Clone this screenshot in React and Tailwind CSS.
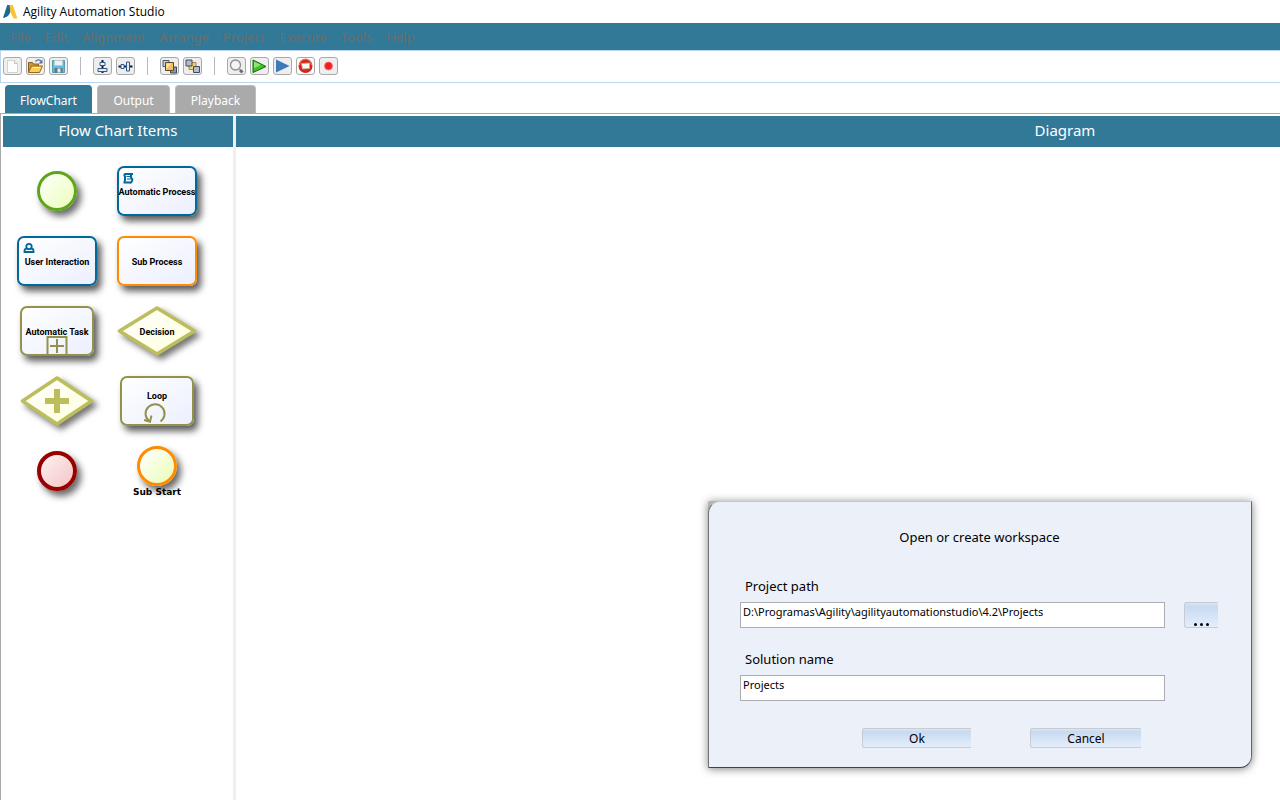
import clsx from 'clsx';

const MENUS = ['File', 'Edit', 'Alignment', 'Arrange', 'Project', 'Execute', 'Tools', 'Help'];

function Logo() {
  return (
    <svg width="16" height="16" viewBox="0 0 16 16" className="shrink-0" aria-hidden="true">
      <path d="M5.2 1h4L8.200 8.200C7.200 11 5 13.600 1 14z" fill="#1f6b86" />
      <path d="M7.400 1h3.400L15.400 14.600h-3.400C10.600 13 9.600 11 8.800 8.600z" fill="#fbc22d" />
    </svg>
  );
}

function Icon({ children }) {
  return (
    <svg width="17" height="16" viewBox="0 0 17 16" className="shrink-0" aria-hidden="true">
      {children}
    </svg>
  );
}

const NewIcon = () => (
  <Icon>
    <path d="M3.500 2.500h7l3 3v9h-10z" fill="#fdfdfd" stroke="#d4d4d4" />
    <path d="M10.500 2.500v3h3" fill="#eee" stroke="#c4c4c4" />
  </Icon>
);

const OpenIcon = () => (
  <Icon>
    <path d="M1.500 14V4.500h4l1 1.500h5V8" fill="#c99a3c" stroke="#80601f" />
    <path d="M1.500 14.500l3-6.500h11l-3 6.500z" fill="#f9cf58" stroke="#946b1c" />
    <path d="M5.500 9.500h8" stroke="#fdeeb0" />
    <path d="M8.500 3.500c2-2.500 4.500-2 5.500 0" fill="none" stroke="#51749c" strokeWidth="1.300" />
    <path d="M15.500 1.500v4h-4z" fill="#51749c" />
  </Icon>
);

const SaveIcon = () => (
  <Icon>
    <path d="M2.500 2.500h12v12h-12z" fill="#58c0e4" stroke="#5b9cb5" />
    <path d="M4.500 2.500h8v5h-8z" fill="#eef1f3" stroke="#b7cbd3" />
    <path d="M4.500 10h8v5h-8z" fill="#5d7a88" />
    <path d="M7.500 10.500h3v4h-3z" fill="#e6ebee" />
  </Icon>
);

const AlignCenterIcon = () => (
  <Icon>
    <path d="M8.500 2v13" stroke="#111827" strokeWidth="2" />
    <path d="M6 4.500h5v3H6z" fill="#f4f8fe" stroke="#31578f" />
    <path d="M4 10.500h9v3H4z" fill="#dfeaf8" stroke="#31578f" />
  </Icon>
);

const AlignMiddleIcon = () => (
  <Icon>
    <path d="M1.500 8.500h14" stroke="#111827" strokeWidth="2" />
    <path d="M4 6.500h3v4H4z" fill="#f4f8fe" stroke="#31578f" />
    <path d="M9.500 4h3v9h-3z" fill="#dfeaf8" stroke="#31578f" />
  </Icon>
);

const BringFrontIcon = () => (
  <Icon>
    <path d="M2 2.500h6v6H2z" fill="#c9d1de" stroke="#4c5870" />
    <path d="M9.500 9h6v6h-6z" fill="#8d98aa" stroke="#3d4657" />
    <path d="M4.500 4.500h8v8h-8z" fill="#f3c25c" stroke="#5d4a22" />
    <path d="M5.500 5.500h5l-5 5z" fill="#fde7a6" />
  </Icon>
);

const SendBackIcon = () => (
  <Icon>
    <path d="M5 4.500h7v7H5z" fill="#f7ce68" stroke="#b3872d" />
    <path d="M2 2h6v6H2z" fill="#b3bccb" stroke="#3f4a5f" />
    <path d="M9.500 8.500h6v6h-6z" fill="#b3bccb" stroke="#3f4a5f" />
  </Icon>
);

const SearchIcon = () => (
  <Icon>
    <circle cx="7.500" cy="7" r="5" fill="#f3f4f6" stroke="#8e8e8e" strokeWidth="1.300" />
    <path d="M11 10.500l1.500 1.500" stroke="#aaa" strokeWidth="1.500" />
    <path d="M12 12l2.500 2.500" stroke="#6f6f6f" strokeWidth="3" />
  </Icon>
);

const RunIcon = () => (
  <Icon>
    <path d="M2 2l13 6.500L2 14.500z" fill="#3fc422" stroke="#15620d" />
    <path d="M3 3.500l7 3.500-7 3z" fill="#8fe56e" />
  </Icon>
);

const StepIcon = () => (
  <Icon>
    <path d="M2 1.500l13.500 6.500L2 14.500z" fill="#3f79b8" />
  </Icon>
);

const StopIcon = () => (
  <Icon>
    <circle cx="8.500" cy="8" r="7" fill="#da2414" />
    <path d="M2.500 7a6 6 0 0 1 12 0" fill="none" stroke="#f2785f" strokeWidth="1.200" />
    <path d="M4.500 5.500l8-.500v5.500l-7 .500z" fill="#f8f8f8" stroke="#b9a9a5" strokeWidth="0.800" />
  </Icon>
);

const RecordIcon = () => (
  <Icon>
    <circle cx="8.500" cy="8" r="4" fill="#ef2020" stroke="#f47a7a" strokeWidth="0.800" />
  </Icon>
);

const TOOL_GROUPS = [
  [
    { label: 'New', icon: NewIcon },
    { label: 'Open', icon: OpenIcon },
    { label: 'Save', icon: SaveIcon },
  ],
  [
    { label: 'Align center', icon: AlignCenterIcon },
    { label: 'Align middle', icon: AlignMiddleIcon },
  ],
  [
    { label: 'Bring to front', icon: BringFrontIcon },
    { label: 'Send to back', icon: SendBackIcon },
  ],
  [
    { label: 'Find', icon: SearchIcon },
    { label: 'Run', icon: RunIcon },
    { label: 'Step', icon: StepIcon },
    { label: 'Stop', icon: StopIcon, light: true },
    { label: 'Record', icon: RecordIcon },
  ],
];

function Toolbar() {
  return (
    <div role="toolbar" className="flex h-[33px] shrink-0 items-center border-y border-l border-[#bcd5ef] pb-0.5 pl-0.5">
      {TOOL_GROUPS.map((group, i) => (
        <div key={i} className="flex items-center">
          {i > 0 && <div className="mx-3 h-[18px] w-px bg-[#b4bac2]" />}
          <div className="flex gap-1">
            {group.map(({ label, icon: ToolIcon, light }) => (
              <button
                key={label}
                aria-label={label}
                className={clsx(
                  'flex h-[18px] w-[19px] items-center justify-center rounded-[3px] border border-[#a9a9a9]',
                  light ? 'bg-white' : 'bg-[#eeeeee]',
                )}
              >
                <ToolIcon />
              </button>
            ))}
          </div>
        </div>
      ))}
    </div>
  );
}

function Tabs() {
  const tab = 'h-7 rounded-t-[4px] border-x border-t pt-px text-[12px] leading-[27px] text-white';
  return (
    <div role="tablist" className="flex shrink-0 items-end gap-[5px] border-b border-[#aaaaaa] pl-[5px] pt-0.5">
      <button role="tab" aria-selected="true" className={clsx(tab, 'w-[87px] bg-[#327997] border-[#327997]')}>
        FlowChart
      </button>
      <button role="tab" aria-selected="false" className={clsx(tab, 'w-[73px] bg-[#aaaaaa] border-[#bcbcbc]')}>
        Output
      </button>
      <button role="tab" aria-selected="false" className={clsx(tab, 'w-[81px] bg-[#aaaaaa] border-[#bcbcbc]')}>
        Playback
      </button>
    </div>
  );
}

function PanelTitle({ children }) {
  return <h2 className="h-[31px] bg-[#327997] text-center text-[15px] leading-7 text-white">{children}</h2>;
}

function Circle({ className }) {
  return (
    <div className={clsx('size-10 rounded-full bg-linear-to-br shadow-[4px_5px_7px_rgba(0,0,0,0.6)]', className)} />
  );
}

function Box({ className, children }) {
  return (
    <div
      className={clsx(
        'relative flex h-[50px] items-center justify-center rounded-[7px] border-2 bg-linear-to-br from-white to-[#eceffe] pt-0.5 shadow-[4px_5px_7px_rgba(0,0,0,0.65)]',
        className,
      )}
    >
      {children}
    </div>
  );
}

function Diamond({ wide, children }) {
  const width = wide ? 80 : 74;
  const fillId = wide ? 'decision-fill' : 'gateway-fill';
  return (
    <svg width={width} height="50" className="drop-shadow-[4px_4px_3px_rgba(0,0,0,0.55)]" aria-hidden="true">
      <defs>
        <linearGradient id={fillId} x1="0" y1="0" x2="1" y2="1">
          <stop offset="0" stopColor="#ffffff" />
          <stop offset="1" stopColor="#fdffda" />
        </linearGradient>
      </defs>
      <path
        d={`M2.500 25L${width / 2} 2L${width - 2.5} 25L${width / 2} 48Z`}
        fill={`url(#${fillId})`}
        stroke="#bcbd5c"
        strokeWidth="3.500"
        strokeLinejoin="round"
      />
      {children}
    </svg>
  );
}

function Label({ className, children }) {
  return (
    <span
      className={clsx("font-['Roboto','Noto_Sans',sans-serif] text-[9px] leading-3 font-bold whitespace-nowrap", className)}
    >
      {children}
    </span>
  );
}

function Palette() {
  return (
    <div className="grid grid-cols-[100px_100px] auto-rows-[70px] place-items-center pl-1 pt-[9px]">
      <Circle className="border-3 border-[#5ea51b] from-white to-[#eafdb5]" />

      <Box className="w-20 border-[#00699c]">
        <svg width="12" height="12" className="absolute left-[3px] top-1" fill="none" stroke="#00699c" aria-hidden="true">
          <path d="M11 2H3.500Q1.500 2.500 3 4.500V9" strokeWidth="2" />
          <path d="M9 2v3.500q2 1.500 1 3.500t-2 1.500H2.500V9" strokeWidth="2" />
          <path d="M4.500 4.500h4M5 7h4" strokeWidth="1.200" />
        </svg>
        <Label>Automatic Process</Label>
      </Box>

      <Box className="w-20 border-[#00699c]">
        <svg width="12" height="12" className="absolute left-1 top-1" fill="none" stroke="#00699c" aria-hidden="true">
          <path d="M1.500 10V8.500q0-2 3-2h3q3 0 3 2V10z" strokeWidth="1.800" />
          <circle cx="6" cy="4.500" r="2.700" fill="#f6f8fe" strokeWidth="1.800" />
        </svg>
        <Label>User Interaction</Label>
      </Box>

      <Box className="w-20 border-[#ff8c00]">
        <Label>Sub Process</Label>
      </Box>

      <Box className="w-[74px] border-[#93924a]">
        <svg width="22" height="18" className="absolute bottom-0" fill="none" stroke="#93924a" aria-hidden="true">
          <path d="M1.500 18V1h19v17" strokeWidth="2" />
          <path d="M11 3v14M4 10h14" strokeWidth="2" />
        </svg>
        <Label className="relative">Automatic Task</Label>
      </Box>

      <div className="relative flex items-center justify-center">
        <Diamond wide />
        <Label className="absolute pt-0.5">Decision</Label>
      </div>

      <Diamond>
        <path d="M37 13v24M25 25h24" stroke="#bcbd5c" strokeWidth="6" />
      </Diamond>

      <Box className="w-[74px] border-[#93924a]">
        <Label className="mb-3">Loop</Label>
        <svg width="24" height="22" className="absolute bottom-0 left-[22px]" fill="none" stroke="#93924a" aria-hidden="true">
          <path d="M5 19A9.500 9.500 0 1 1 16.500 19.500" strokeWidth="2" />
          <path d="M0 18l6 1.700l1.500-6.200" strokeWidth="2" />
        </svg>
      </Box>

      <Circle className="border-4 border-[#990000] from-[#fdf3f3] to-[#f3c4c4]" />

      <div className="flex flex-col items-center">
        <Circle className="border-3 border-[#ff8c00] from-white to-[#eafdb5]" />
        <span className="relative -mb-0.5 font-['DejaVu_Sans',sans-serif] text-[9px] leading-3 font-bold">Sub Start</span>
      </div>
    </div>
  );
}

function WorkspaceDialog() {
  const input =
    'h-[26px] w-[425px] border border-[#abadb3] bg-white px-0.5 pb-2 text-[11px] leading-4 outline-none';
  const button =
    'rounded-l-[3px] border-y border-l border-[#c8cbd0] bg-linear-to-b from-[#dbe6f5] via-[#c8daf0] via-15% to-[#e4eefc]';

  return (
    <div
      role="dialog"
      aria-labelledby="workspace-title"
      className="absolute right-7 bottom-8 w-[544px] rounded-tl-[2px] rounded-br-[12px] bg-[#b4b4b4] shadow-[0_1px_8px_rgba(0,0,0,0.5)]"
    >
      <form className="rounded-tl-[12px] rounded-br-[12px] border border-t-[#c6c8ca] border-r-[#63676b] border-b-[#3e4245] border-l-[#6f7376] bg-[#ecf0f9] pt-[25px] pb-[19px] pl-[31px] text-[13px] leading-5">
        <h1 id="workspace-title" className="pr-8 text-center">
          Open or create workspace
        </h1>

        <label htmlFor="project-path" className="mt-[29px] block pl-[5px]">
          Project path
        </label>
        <div className="mt-1.5 flex gap-[19px]">
          <input
            id="project-path"
            type="text"
            className={input}
            defaultValue="D:\Programas\Agility\agilityautomationstudio\4.2\Projects"
          />
          <button
            type="button"
            aria-label="Browse"
            className={clsx(button, 'flex h-[26px] w-[34px] items-end justify-center gap-[3px] pb-px')}
          >
            <span className="size-[3px] rounded-full bg-black" />
            <span className="size-[3px] rounded-full bg-black" />
            <span className="size-[3px] rounded-full bg-black" />
          </button>
        </div>

        <label htmlFor="solution-name" className="mt-[21px] block pl-[5px]">
          Solution name
        </label>
        <input id="solution-name" type="text" className={clsx(input, 'mt-1.5 block')} defaultValue="Projects" />

        <div className="mt-[27px] flex gap-[59px] pl-[122px] text-[12px] leading-[18px]">
          <button type="button" className={clsx(button, 'h-5 w-[109px] pt-px')}>
            Ok
          </button>
          <button type="button" className={clsx(button, 'h-5 w-[111px] pt-px')}>
            Cancel
          </button>
        </div>
      </form>
    </div>
  );
}

export default function App() {
  return (
    <div className="relative flex h-screen flex-col overflow-hidden bg-white font-['Noto_Sans','Open_Sans',sans-serif] text-black">
      <header className="flex h-[23px] shrink-0 items-center gap-[5px] pl-0.5 font-['Open_Sans','Noto_Sans',sans-serif] text-[12px]">
        <Logo />
        <span>Agility Automation Studio</span>
      </header>

      <nav className="flex h-[27px] shrink-0 items-center gap-[14px] bg-[#327997] pt-0.5 pl-2.5 text-[13px] text-[#6d6d6d]">
        {MENUS.map((menu) => (
          <button key={menu}>{menu}</button>
        ))}
      </nav>

      <Toolbar />
      <Tabs />

      <main className="flex min-h-0 grow border-l border-[#aaaaaa] pt-0.5">
        <aside className="w-[232px] shrink-0 pl-0.5">
          <PanelTitle>Flow Chart Items</PanelTitle>
          <Palette />
        </aside>
        <div className="w-[3px] shrink-0 bg-[#f0f0f0]" />
        <section className="min-w-[1658px] grow">
          <PanelTitle>Diagram</PanelTitle>
        </section>
      </main>

      <WorkspaceDialog />
    </div>
  );
}
